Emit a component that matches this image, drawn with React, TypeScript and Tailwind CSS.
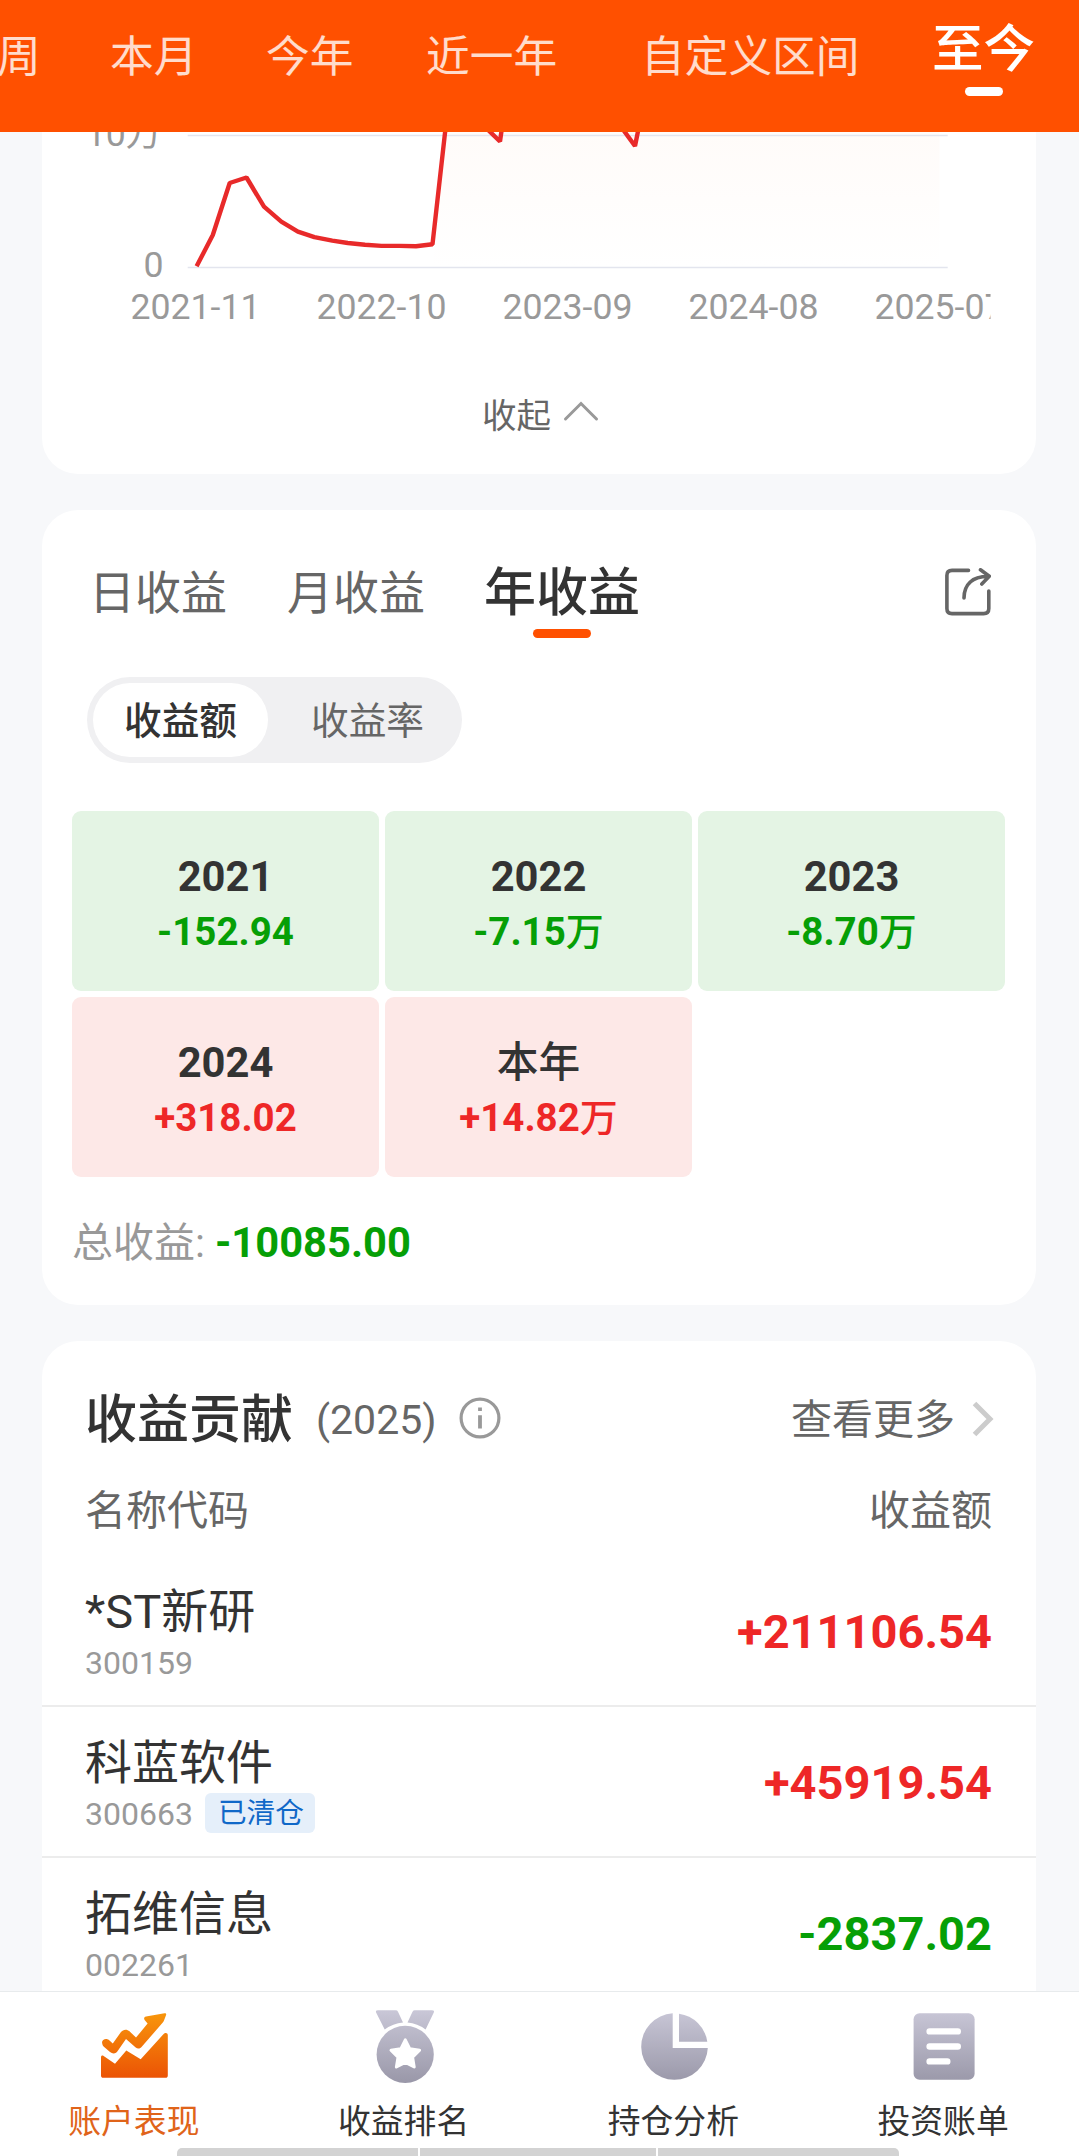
import clsx from "clsx";
import type { ReactNode } from "react";

interface YearIncome {
  label: string;
  value: string;
  unit?: string;
}

interface Contribution {
  name: string;
  code: string;
  amount: string;
  cleared?: boolean;
}

const RANGES = [
  { label: "周", className: "w-[44px] -ml-[3px]" },
  { label: "本月", className: "w-[88px] ml-[69px]" },
  { label: "今年", className: "w-[88px] ml-[68px]" },
  { label: "近一年", className: "w-[132px] ml-[72px]" },
  { label: "自定义区间", className: "w-[220px] ml-[83px]" },
];

const AXIS_LABELS = ["2021-11", "2022-10", "2023-09", "2024-08", "2025-07"];

const YEARS: YearIncome[] = [
  { label: "2021", value: "-152.94" },
  { label: "2022", value: "-7.15", unit: "万" },
  { label: "2023", value: "-8.70", unit: "万" },
  { label: "2024", value: "+318.02" },
  { label: "本年", value: "+14.82", unit: "万" },
];

const CONTRIBUTIONS: Contribution[] = [
  { name: "*ST新研", code: "300159", amount: "+211106.54" },
  { name: "科蓝软件", code: "300663", amount: "+45919.54", cleared: true },
  { name: "拓维信息", code: "002261", amount: "-2837.02" },
];

function amountColor(amount: string) {
  return amount.startsWith("-") ? "text-[#069f06]" : "text-[#ee2727]";
}

function RangeTabs() {
  return (
    <header className="flex h-[132px] shrink-0 items-start bg-[#ff5000] whitespace-nowrap text-white">
      {RANGES.map((range) => (
        <button
          key={range.label}
          type="button"
          className={clsx("mt-[35px] shrink-0 text-left text-[43.7px] leading-[44px] text-white/80", range.className)}
        >
          {range.label}
        </button>
      ))}
      <button type="button" className="mt-[25px] ml-[71px] flex shrink-0 flex-col items-center">
        <span className="text-[51.5px] leading-[50px] font-medium">至今</span>
        <span className="mt-[12px] h-[9px] w-[38px] rounded-full bg-white" />
      </button>
    </header>
  );
}

function TrendChart() {
  return (
    <svg viewBox="0 0 994 210" className="block h-[210px] w-[994px]" fontFamily='Roboto, "Noto Sans CJK SC", sans-serif'>
      <defs>
        <linearGradient id="trendFill" x1="0" y1="0" x2="0" y2="1">
          <stop offset="0" stopColor="#fffbf9" />
          <stop offset="1" stopColor="#ffffff" />
        </linearGradient>
        <clipPath id="plotClip">
          <rect x="0" y="0" width="948.5" height="210" />
        </clipPath>
      </defs>
      <path d="M403 0H897.5V135H391Z" fill="url(#trendFill)" />
      <path d="M145.7 3.5H905.7M145.7 135.5H905.7" stroke="#e3e5ee" strokeWidth="1.3" />
      <path
        d="M154.6 134.3L170.8 103L187.7 51L204.5 45.5L222 74.7L239.3 89.7L255.9 99.7L272.4 105.2L290.3 108.6L305.8 111L323 112.8L339.5 113.9H357.5L374 114.3L390.5 112.3L404 -8M440 -8L458 9.5L460.5 -8M577 -8L593 14L597.5 -8"
        fill="none"
        stroke="#e82a2a"
        strokeWidth="4.4"
        strokeLinejoin="bevel"
      />
      <g fill="#999999" fontSize="35.7" clipPath="url(#plotClip)">
        <text x="119.5" y="14" textAnchor="end">10万</text>
        <text x="121.5" y="144.5" textAnchor="end">0</text>
        {AXIS_LABELS.map((label, i) => (
          <text key={label} x={153.5 + i * 186} y="187" textAnchor="middle">
            {label}
          </text>
        ))}
      </g>
    </svg>
  );
}

function ShareIcon() {
  return (
    <svg viewBox="0 0 46 48" className="h-[48px] w-[46px]" fill="none" stroke="#666" strokeWidth="3.6" strokeLinecap="round" strokeLinejoin="round">
      <path d="M23.5 2.4H7Q1.9 2.4 1.9 7.4V40.5Q1.9 45.6 7 45.6H38.6Q43.8 45.6 43.8 40.5V23" />
      <path d="M19 30C19 16.5 27 8.6 43 8.4M35.5 1.8L44.3 8.2L36.8 16" />
    </svg>
  );
}

function YearTile({ label, value, unit }: YearIncome) {
  return (
    <div
      className={clsx(
        "flex h-[180px] flex-col items-center rounded-[9px] pt-[41px] font-bold",
        value.startsWith("-") ? "bg-[#e4f4e4]" : "bg-[#fde8e7]",
      )}
    >
      <div className={clsx("text-[41.7px] leading-[50px] text-[#333]", label === "本年" && "font-medium")}>{label}</div>
      <div className={clsx("mt-[6px] text-[38.5px] leading-[48px]", amountColor(value))}>
        {value}
        {unit && <span className="text-[38px] font-medium">{unit}</span>}
      </div>
    </div>
  );
}

function IncomeCard() {
  return (
    <section className="mt-[36px] h-[795px] shrink-0 rounded-[36px] bg-white pr-[31px] pl-[30px]">
      <div className="flex h-[128px] items-start pr-[14px] pl-[17px] text-[46px] leading-[50px] text-[#666]">
        <button type="button" className="mt-[58px]">日收益</button>
        <button type="button" className="mt-[58px] ml-[60px]">月收益</button>
        <button type="button" className="mt-[59px] ml-[59px] flex flex-col items-center">
          <span className="text-[52px] leading-[50px] font-medium text-[#333]">年收益</span>
          <span className="mt-[10px] h-[9px] w-[58px] rounded-full bg-[#ff5000]" />
        </button>
        <button type="button" className="mt-[58px] ml-auto">
          <ShareIcon />
        </button>
      </div>

      <div className="mt-[39px] ml-[15px] flex h-[86px] w-[375px] items-center rounded-[43px] bg-[#f0f0f2] p-[6px] text-[37.7px]">
        <button type="button" className="h-[74px] w-[175px] rounded-[37px] bg-white pt-[3px] font-medium text-[#333]">
          收益额
        </button>
        <button type="button" className="ml-[12px] h-[74px] w-[175px] pt-[3px] text-[#666]">收益率</button>
      </div>

      <div className="mt-[48px] grid grid-cols-3 gap-[6px]">
        {YEARS.map((year) => (
          <YearTile key={year.label} {...year} />
        ))}
      </div>

      <div className="mt-[41px] flex items-baseline text-[41px] leading-[50px] text-[#999]">
        总收益:
        <span className="ml-[10px] text-[41.7px] font-bold text-[#069f06]">-10085.00</span>
      </div>
    </section>
  );
}

function ContributionRow({ name, code, amount, cleared }: Contribution) {
  return (
    <li className="flex h-[151px] items-center justify-between border-b-2 border-[#ececec] pt-[4px] pr-[44px] pl-[43px]">
      <div>
        <div className="text-[47px] leading-[60px] text-[#333]">{name}</div>
        <div className="mt-[1px] flex h-[40px] items-center text-[32px] leading-[40px] text-[#999]">
          {code}
          {cleared && (
            <span className="mb-[3px] ml-[12px] h-[40px] w-[110px] rounded-[6px] bg-[#e5effa] pl-[2px] text-center text-[28.7px] leading-[40px] text-[#1068c8]">
              已清仓
            </span>
          )}
        </div>
      </div>
      <div className={clsx("text-[47px] font-bold", amountColor(amount))}>{amount}</div>
    </li>
  );
}

function ContributionCard() {
  return (
    <section className="mt-[36px] shrink-0 rounded-t-[36px] bg-white pt-[50px]">
      <div className="flex h-[60px] items-center pr-[42px] pl-[43px]">
        <h2 className="text-[52px] font-medium text-[#333]">收益贡献</h2>
        <span className="ml-[23px] text-[41px] text-[#666]">(2025)</span>
        <svg viewBox="0 0 42 42" className="mb-[6px] ml-[22px] h-[42px] w-[42px]" fill="none" stroke="#999" strokeWidth="3.2">
          <circle cx="21" cy="21" r="18.9" />
          <path d="M21 18.2V31.5M21 10.5V14" strokeWidth="3.8" />
        </svg>
        <button type="button" className="ml-auto flex items-center text-[41px] text-[#666]">
          查看更多
          <svg viewBox="0 0 22 36" className="mb-[5px] ml-[17px] h-[36px] w-[22px]" fill="none" stroke="#ccc" strokeWidth="5">
            <path d="M2.5 2.5L18 18L2.5 33.5" />
          </svg>
        </button>
      </div>
      <div className="mt-[31px] flex h-[60px] items-center justify-between pr-[44px] pl-[43px] text-[41px] text-[#666]">
        <span>名称代码</span>
        <span>收益额</span>
      </div>
      <ul className="mt-[14px]">
        {CONTRIBUTIONS.map((item) => (
          <ContributionRow key={item.code} {...item} />
        ))}
      </ul>
    </section>
  );
}

function IconGradients() {
  return (
    <defs>
      <linearGradient id="navActive" gradientUnits="userSpaceOnUse" x1="0" y1="13" x2="0" y2="78">
        <stop offset="0" stopColor="#f8960b" />
        <stop offset="1" stopColor="#eb5305" />
      </linearGradient>
      <linearGradient id="navIdle" gradientUnits="userSpaceOnUse" x1="0" y1="10" x2="0" y2="82">
        <stop offset="0" stopColor="#c9c7d7" />
        <stop offset="1" stopColor="#9a98a9" />
      </linearGradient>
    </defs>
  );
}

function NavItem({ label, active, children }: { label: string; active?: boolean; children: ReactNode }) {
  return (
    <button type="button" className="flex flex-1 flex-col items-center pt-[8px]">
      <svg viewBox="0 0 90 90" className="h-[90px] w-[90px]" fill={active ? "url(#navActive)" : "url(#navIdle)"}>
        <IconGradients />
        {children}
      </svg>
      <span className={clsx("mt-[12px] pr-[2px] text-[32.8px] leading-[40px]", active ? "text-[#e0641a]" : "text-[#333]")}>{label}</span>
    </button>
  );
}

function BottomNav() {
  return (
    <nav className="relative flex h-[165px] shrink-0 border-t border-[#e8ebed] bg-white">
      <NavItem label="账户表现" active>
        <path d="M12.2 43.5C11 39 17 37.5 19.5 40.5L22.8 43.4L30.8 32.2C33 29.2 37 28.8 39.5 31.3L46 37.6L57.6 23.6L54.8 20.3C53.4 18.6 54.3 16.9 56 16.6L74.5 13.2C76 13 76.5 14 76 15.3L73.8 21C73.5 21.6 73.2 22 72.8 22.5L51.3 47.3C49.8 49 47.3 49 45.7 47.6L36 39L28 50.5C26.3 53.5 23 54.5 20 52L13.6 46.5C12.8 45.7 12.4 44.8 12.2 43.5Z" />
        <path d="M11 57C11 55.6 12.5 55 13.6 56L25 63.8L36.3 50.5L50.7 59.3L73.4 34.3C75 32.2 77.8 32.6 77.8 35V75.5C77.8 77 77 77.8 75.5 77.8H13.3C11.8 77.8 11 77 11 75.5Z" />
      </NavItem>
      <NavItem label="收益排名">
        <path d="M17.8 10.3H35.8Q37.3 10.3 38 11.7L43 22.6Q33 23.4 24.7 29.6L16.1 12.6Q15.3 10.3 17.8 10.3ZM54.8 10.3H72Q74.7 10.3 73.8 12.6L65.6 29.6Q57.5 23.4 47.5 22.6L52.5 11.7Q53.3 10.3 54.8 10.3Z" />
        <circle cx="45.2" cy="54.4" r="28.6" />
        <path
          d="M45.3 39.8L49.8 48.8L59.6 50.3L52.6 57.3L54.2 67L45.3 62.5L36.4 67L38 57.3L31 50.3L40.8 48.8Z"
          fill="#fff"
          stroke="#fff"
          strokeWidth="3"
          strokeLinejoin="round"
        />
      </NavItem>
      <NavItem label="持仓分析">
        <path d="M43.7 13.3A33.3 33.3 0 1 0 78.8 48H43.7Z" />
        <path d="M50 13.8A33 33 0 0 1 78.3 41.8H50Z" />
      </NavItem>
      <NavItem label="投资账单">
        <rect x="14.6" y="13.2" width="61" height="66.5" rx="6" />
        <path d="M30.6 31.4H58.8M30.6 46.5H58.8M30.6 61.4H48.3" stroke="#fff" strokeWidth="6.4" strokeLinecap="round" />
      </NavItem>
      {/* system gesture handle */}
      <div className="absolute bottom-0 left-[177px] flex h-[8px] w-[722px] gap-[2px] overflow-hidden rounded-t-[5px]">
        <div className="w-[241px] bg-[#d3d3d3]" />
        <div className="flex-1 bg-[#d3d3d3]" />
        <div className="w-[241px] bg-[#d3d3d3]" />
      </div>
    </nav>
  );
}

export default function App() {
  return (
    <div className="flex h-[2156px] w-[1079px] flex-col overflow-hidden bg-[#f7f8fa] font-[Roboto,'Noto_Sans_CJK_SC',sans-serif]">
      <RangeTabs />
      <main className="flex min-h-0 flex-1 flex-col overflow-hidden pr-[43px] pl-[42px]">
        <section className="h-[342px] shrink-0 rounded-b-[36px] bg-white">
          <TrendChart />
          <button type="button" className="mx-auto mt-[54px] flex h-[40px] items-center pl-[3px] text-[34.5px] leading-[40px] text-[#666]">
            收起
            <svg viewBox="0 0 36 22" className="mb-[10px] ml-[12px] h-[22px] w-[36px]" fill="none" stroke="#999" strokeWidth="3" strokeLinecap="round">
              <path d="M2.5 19L18 3.5L33.5 19" />
            </svg>
          </button>
        </section>
        <IncomeCard />
        <ContributionCard />
      </main>
      <BottomNav />
    </div>
  );
}
